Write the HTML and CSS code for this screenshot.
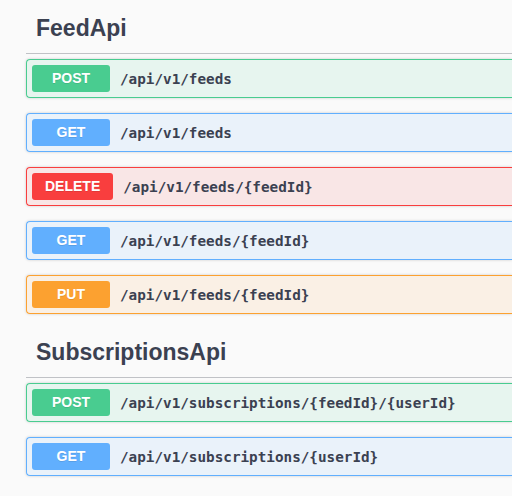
FILE: index.html
```html
<!DOCTYPE html>
<html>
<head>
<meta charset="utf-8">
<link rel="stylesheet" href="styles.css">
</head>
<body>
<div class="wrap">
  <section class="tag">
    <h3 class="tag-title">FeedApi</h3>
    <div class="op op-post"><span class="method">POST</span><span class="path">/api/v1/feeds</span></div>
    <div class="op op-get"><span class="method">GET</span><span class="path">/api/v1/feeds</span></div>
    <div class="op op-delete"><span class="method">DELETE</span><span class="path">/api/v1/feeds/{feedId}</span></div>
    <div class="op op-get"><span class="method">GET</span><span class="path">/api/v1/feeds/{feedId}</span></div>
    <div class="op op-put"><span class="method">PUT</span><span class="path">/api/v1/feeds/{feedId}</span></div>
  </section>
  <section class="tag">
    <h3 class="tag-title">SubscriptionsApi</h3>
    <div class="op op-post"><span class="method">POST</span><span class="path">/api/v1/subscriptions/{feedId}/{userId}</span></div>
    <div class="op op-get"><span class="method">GET</span><span class="path">/api/v1/subscriptions/{userId}</span></div>
  </section>
</div>
</body>
</html>
```
FILE: styles.css
```css
html, body {
  margin: 0;
  padding: 0;
  overflow: hidden;
  background: #fafafa;
}
body {
  font-family: "Liberation Sans", Arial, sans-serif;
  color: #3b4151;
}
.wrap {
  padding: 5px 0 0 26px;
}
.tag {
  margin-bottom: 15px;
}
.tag-title {
  margin: 0 0 5px;
  padding: 9px 10px 11px;
  font-size: 23px;
  line-height: 28px;
  font-weight: 700;
  color: #3b4151;
  border-bottom: 1px solid rgba(59, 65, 81, 0.3);
}
.op {
  display: flex;
  align-items: center;
  padding: 5px;
  margin-bottom: 15px;
  border: 1px solid;
  border-right-width: 0;
  border-radius: 4px 0 0 4px;
  box-shadow: 0 0 3px rgba(0, 0, 0, 0.19);
}
.method {
  box-sizing: border-box;
  min-width: 78px;
  height: 27px;
  padding: 0 13px;
  border-radius: 3px;
  color: #fff;
  font-size: 14px;
  font-weight: 700;
  line-height: 27px;
  text-align: center;
  text-shadow: 0 1px 0 rgba(0, 0, 0, 0.1);
}
.path {
  padding: 0 10px;
  font-family: "DejaVu Sans Mono", "Liberation Mono", monospace;
  font-size: 14.3px;
  font-weight: 600;
  color: #3b4151;
}
.op-post { background: rgba(73, 204, 144, 0.1); border-color: #49cc90; }
.op-post .method { background: #49cc90; }
.op-get { background: rgba(97, 175, 254, 0.1); border-color: #61affe; }
.op-get .method { background: #61affe; }
.op-delete { background: rgba(249, 62, 62, 0.1); border-color: #f93e3e; }
.op-delete .method { background: #f93e3e; }
.op-put { background: rgba(252, 161, 48, 0.1); border-color: #fca130; }
.op-put .method { background: #fca130; }
```
